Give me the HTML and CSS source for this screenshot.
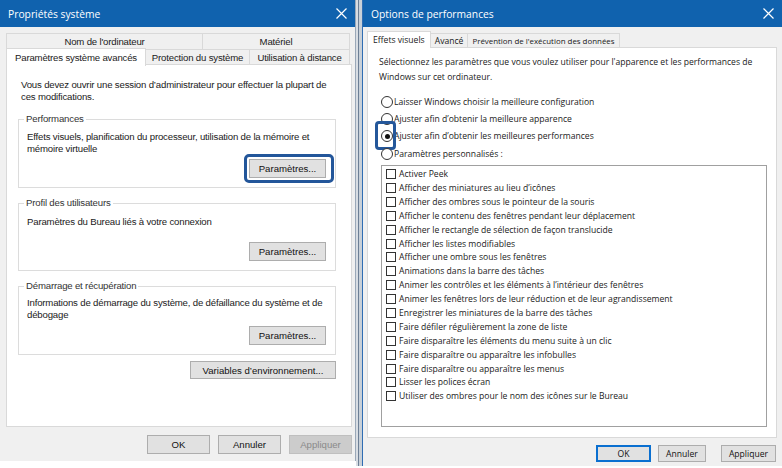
FILE: index.html
```html
<!DOCTYPE html>
<html lang="fr">
<head>
<meta charset="utf-8">
<link rel="stylesheet" href="styles.css">
</head>
<body>
<div class="screen">
  <div class="win left">
    <div class="titlebar">
      <span class="title">Propriétés système</span>
      <svg class="close" width="11" height="11" viewBox="0 0 11 11"><path d="M0.5 0.5 L10.5 10.5 M10.5 0.5 L0.5 10.5" stroke="#fff" stroke-width="1.2"/></svg>
    </div>
    <div class="lbody">
      <div class="ltabs">
        <div class="trow">
          <div class="tab t1">Nom de l'ordinateur</div>
          <div class="tab t2">Matériel</div>
        </div>
        <div class="trow">
          <div class="tab t3 sel">Paramètres système avancés</div>
          <div class="tab t4">Protection du système</div>
          <div class="tab t5">Utilisation à distance</div>
        </div>
      </div>
      <div class="lpanel">
        <p class="intro">Vous devez ouvrir une session d’administrateur pour effectuer la plupart de ces modifications.</p>
        <div class="grp g1">
          <span class="glabel">Performances</span>
          <p class="gtext">Effets visuels, planification du processeur, utilisation de la mémoire et mémoire virtuelle</p>
          <div class="grow"><button class="btn pbtn hl">Paramètres...</button></div>
        </div>
        <div class="grp g2">
          <span class="glabel">Profil des utilisateurs</span>
          <p class="gtext">Paramètres du Bureau liés à votre connexion</p>
          <div class="grow"><button class="btn pbtn">Paramètres...</button></div>
        </div>
        <div class="grp g3">
          <span class="glabel">Démarrage et récupération</span>
          <p class="gtext">Informations de démarrage du système, de défaillance du système et de débogage</p>
          <div class="grow"><button class="btn pbtn">Paramètres...</button></div>
        </div>
        <div class="envrow"><button class="btn envbtn">Variables d’environnement...</button></div>
      </div>
      <div class="lfoot">
        <button class="btn fbtn">OK</button>
        <button class="btn fbtn">Annuler</button>
        <button class="btn fbtn dis">Appliquer</button>
      </div>
    </div>
  </div>
  <div class="gap"></div>
  <div class="win right">
    <div class="titlebar">
      <span class="title">Options de performances</span>
      <svg class="close" width="11" height="11" viewBox="0 0 11 11"><path d="M0.5 0.5 L10.5 10.5 M10.5 0.5 L0.5 10.5" stroke="#fff" stroke-width="1.2"/></svg>
    </div>
    <div class="rbody">
      <div class="rtabs">
        <div class="rtab sel">Effets visuels</div>
        <div class="rtab">Avancé</div>
        <div class="rtab narrow">Prévention de l'exécution des données</div>
      </div>
      <div class="rpanel">
        <p class="rintro">Sélectionnez les paramètres que vous voulez utiliser pour l'apparence et les performances de Windows sur cet ordinateur.</p>
        <div class="radios">
          <div class="radio"><span class="rb"></span>Laisser Windows choisir la meilleure configuration</div>
          <div class="radio"><span class="rb"></span>Ajuster afin d’obtenir la meilleure apparence</div>
          <div class="radio"><span class="rb on"></span>Ajuster afin d’obtenir les meilleures performances<span class="rhl"></span></div>
          <div class="radio"><span class="rb"></span>Paramètres personnalisés :</div>
        </div>
        <div class="list">
          <div class="ck"><span class="cb"></span>Activer Peek</div>
          <div class="ck"><span class="cb"></span>Afficher des miniatures au lieu d’icônes</div>
          <div class="ck"><span class="cb"></span>Afficher des ombres sous le pointeur de la souris</div>
          <div class="ck"><span class="cb"></span>Afficher le contenu des fenêtres pendant leur déplacement</div>
          <div class="ck"><span class="cb"></span>Afficher le rectangle de sélection de façon translucide</div>
          <div class="ck"><span class="cb"></span>Afficher les listes modifiables</div>
          <div class="ck"><span class="cb"></span>Afficher une ombre sous les fenêtres</div>
          <div class="ck"><span class="cb"></span>Animations dans la barre des tâches</div>
          <div class="ck"><span class="cb"></span>Animer les contrôles et les éléments à l’intérieur des fenêtres</div>
          <div class="ck"><span class="cb"></span>Animer les fenêtres lors de leur réduction et de leur agrandissement</div>
          <div class="ck"><span class="cb"></span>Enregistrer les miniatures de la barre des tâches</div>
          <div class="ck"><span class="cb"></span>Faire défiler régulièrement la zone de liste</div>
          <div class="ck"><span class="cb"></span>Faire disparaître les éléments du menu suite à un clic</div>
          <div class="ck"><span class="cb"></span>Faire disparaître ou apparaître les infobulles</div>
          <div class="ck"><span class="cb"></span>Faire disparaître ou apparaître les menus</div>
          <div class="ck"><span class="cb"></span>Lisser les polices écran</div>
          <div class="ck"><span class="cb"></span>Utiliser des ombres pour le nom des icônes sur le Bureau</div>
        </div>
      </div>
      <div class="rfoot">
        <button class="btn rbtn def">OK</button>
        <button class="btn rbtn">Annuler</button>
        <button class="btn rbtn">Appliquer</button>
      </div>
    </div>
  </div>
</div>
</body>
</html>
```

FILE: styles.css
```css
* { box-sizing: border-box; }
html, body { margin: 0; padding: 0; background: #ffffff; }
body { width: 782px; height: 468px; overflow: hidden; }
p { margin: 0; }
.screen { display: flex; align-items: flex-start; width: 782px; height: 468px; background: #ffffff; }

.win { background: #f0f0f0; display: flex; flex-direction: column; }
.win.left { width: 356px; height: 461px; border-right: 1px solid #9aa8b8; }
.win.right { width: 420px; height: 466px; border-left: 1px solid #2f6db3; }
.gap { width: 6px; height: 466px; background: linear-gradient(90deg, #d8dde3 0, #d8dde3 2px, #6d7f95 2px, #6d7f95 3px, #c8d0d8 3px); }

.titlebar { height: 27px; flex: none; background: #1062ae; display: flex; align-items: center; justify-content: space-between; padding: 0 8px 0 8px; }
.title { font-family: "Open Sans", "Noto Sans", sans-serif; font-size: 10.3px; color: #ffffff; }
.close { display: block; }

/* left window */
.lbody { font-family: "Liberation Sans", Arial, sans-serif; font-size: 9.6px; letter-spacing: -0.17px; color: #1a1a1a; padding: 6px 4px 0 6px; display: flex; flex-direction: column; }
.ltabs { display: flex; flex-direction: column; }
.trow { display: flex; height: 16px; }
.tab { height: 16px; border: 1px solid #d9d9d9; border-bottom: none; background: #f0f0f0; display: flex; align-items: center; justify-content: center; margin-right: -1px; }
.t1 { width: 197px; }
.t2 { width: 148px; }
.t3 { width: 140px; }
.t4 { width: 105px; }
.t5 { width: 101px; }
.tab.sel { background: #ffffff; height: 18px; margin-top: -1px; position: relative; z-index: 1; }
.lpanel { width: 346px; height: 363px; background: #ffffff; border: 1px solid #d9d9d9; margin-top: -1px; padding: 14px 0 0 14px; }
.intro { line-height: 12px; width: 320px; }
.grp { margin: 16px 0 0 -3px; width: 318px; border: 1px solid #dcdcdc; padding: 0 9px 0 8px; position: relative; }
.glabel { display: block; width: fit-content; margin: -7px 0 0 -3px; padding: 0 2px; background: #ffffff; color: #333; line-height: 12px; }
.gtext { line-height: 12px; margin-top: 7px; width: 300px; }
.g1 { height: 69px; }
.g1 .gtext { margin-top: 6px; }
.g2 { height: 68px; margin-top: 15px; }
.g3 { height: 69px; margin-top: 15px; }
.g3 .gtext { margin-top: 5px; }
.grow { display: flex; justify-content: flex-end; position: absolute; right: 9px; bottom: 9px; }
.btn { font: inherit; color: #111; background: #e1e1e1; border: 1px solid #adadad; padding: 0; border-radius: 0; }
.pbtn { width: 77px; height: 19px; }
.hl { position: relative; }
.hl::after { content: ""; position: absolute; left: -6px; top: -6px; right: -9px; bottom: -6px; border: 3px solid #23569a; border-radius: 5px; }
.envrow { display: flex; justify-content: flex-end; margin-top: 6px; width: 315px; }
.envbtn { width: 146px; height: 18px; }
.lfoot { display: flex; justify-content: flex-end; gap: 8px; margin-top: 8px; padding-right: 0; width: 346px; }
.fbtn { width: 63px; height: 19px; }
.fbtn.dis { background: #cccccc; border-color: #bfbfbf; color: #8a8a8a; }

/* right window */
.rbody { font-family: "Open Sans", "Noto Sans", sans-serif; font-size: 8.6px; color: #1a1a1a; padding: 6px 0 0 4px; display: flex; flex-direction: column; }
.rtabs { display: flex; height: 15px; }
.rtab { height: 15px; border: 1px solid #d9d9d9; border-bottom: none; display: flex; align-items: center; padding: 0 4px; margin-right: -1px; background: #f0f0f0; }
.rtab.narrow { font-size: 7.9px; padding: 0 4px; }
.rtab.sel { background: #ffffff; height: 17px; margin-top: -2px; position: relative; z-index: 1; padding: 0 5px; }
.rpanel { width: 410px; height: 391px; background: #ffffff; border: 1px solid #d9d9d9; margin-top: -1px; padding: 7px 0 0 11px; }
.rintro { line-height: 15px; width: 392px; }
.radios { margin-top: 8px; display: flex; flex-direction: column; }
.radio { height: 17.3px; display: flex; align-items: center; position: relative; }
.rb { width: 12px; height: 12px; border: 1px solid #333; border-radius: 50%; background: #fff; margin: 0 1px 0 2px; position: relative; flex: none; }
.rb.on::after { content: ""; position: absolute; left: 2.5px; top: 2.5px; width: 5px; height: 5px; border-radius: 50%; background: #111; }
.rhl { position: absolute; left: -4px; top: -7px; width: 21px; height: 29px; border: 3px solid #24579a; border-radius: 4px; }
.list { width: 386px; height: 262px; border: 1px solid #a0a0a0; margin: 3px 0 0 2px; padding: 1px 0 0 4px; }
.ck { height: 13.9px; display: flex; align-items: center; }
.cb { width: 10px; height: 10px; border: 1px solid #333; margin-right: 3px; flex: none; background: #fff; }
.rfoot { display: flex; justify-content: flex-end; padding-right: 6px; margin-top: 7px; }
.rbtn { width: 55px; height: 17px; margin-left: 7px; }
.rbtn:nth-child(2) { width: 48px; margin-left: 7px; }
.rbtn:nth-child(3) { margin-left: 15px; }
.rbtn.def { border: 1px solid #0a6fd0; box-shadow: inset 0 0 0 1px #0a6fd0; }
```
